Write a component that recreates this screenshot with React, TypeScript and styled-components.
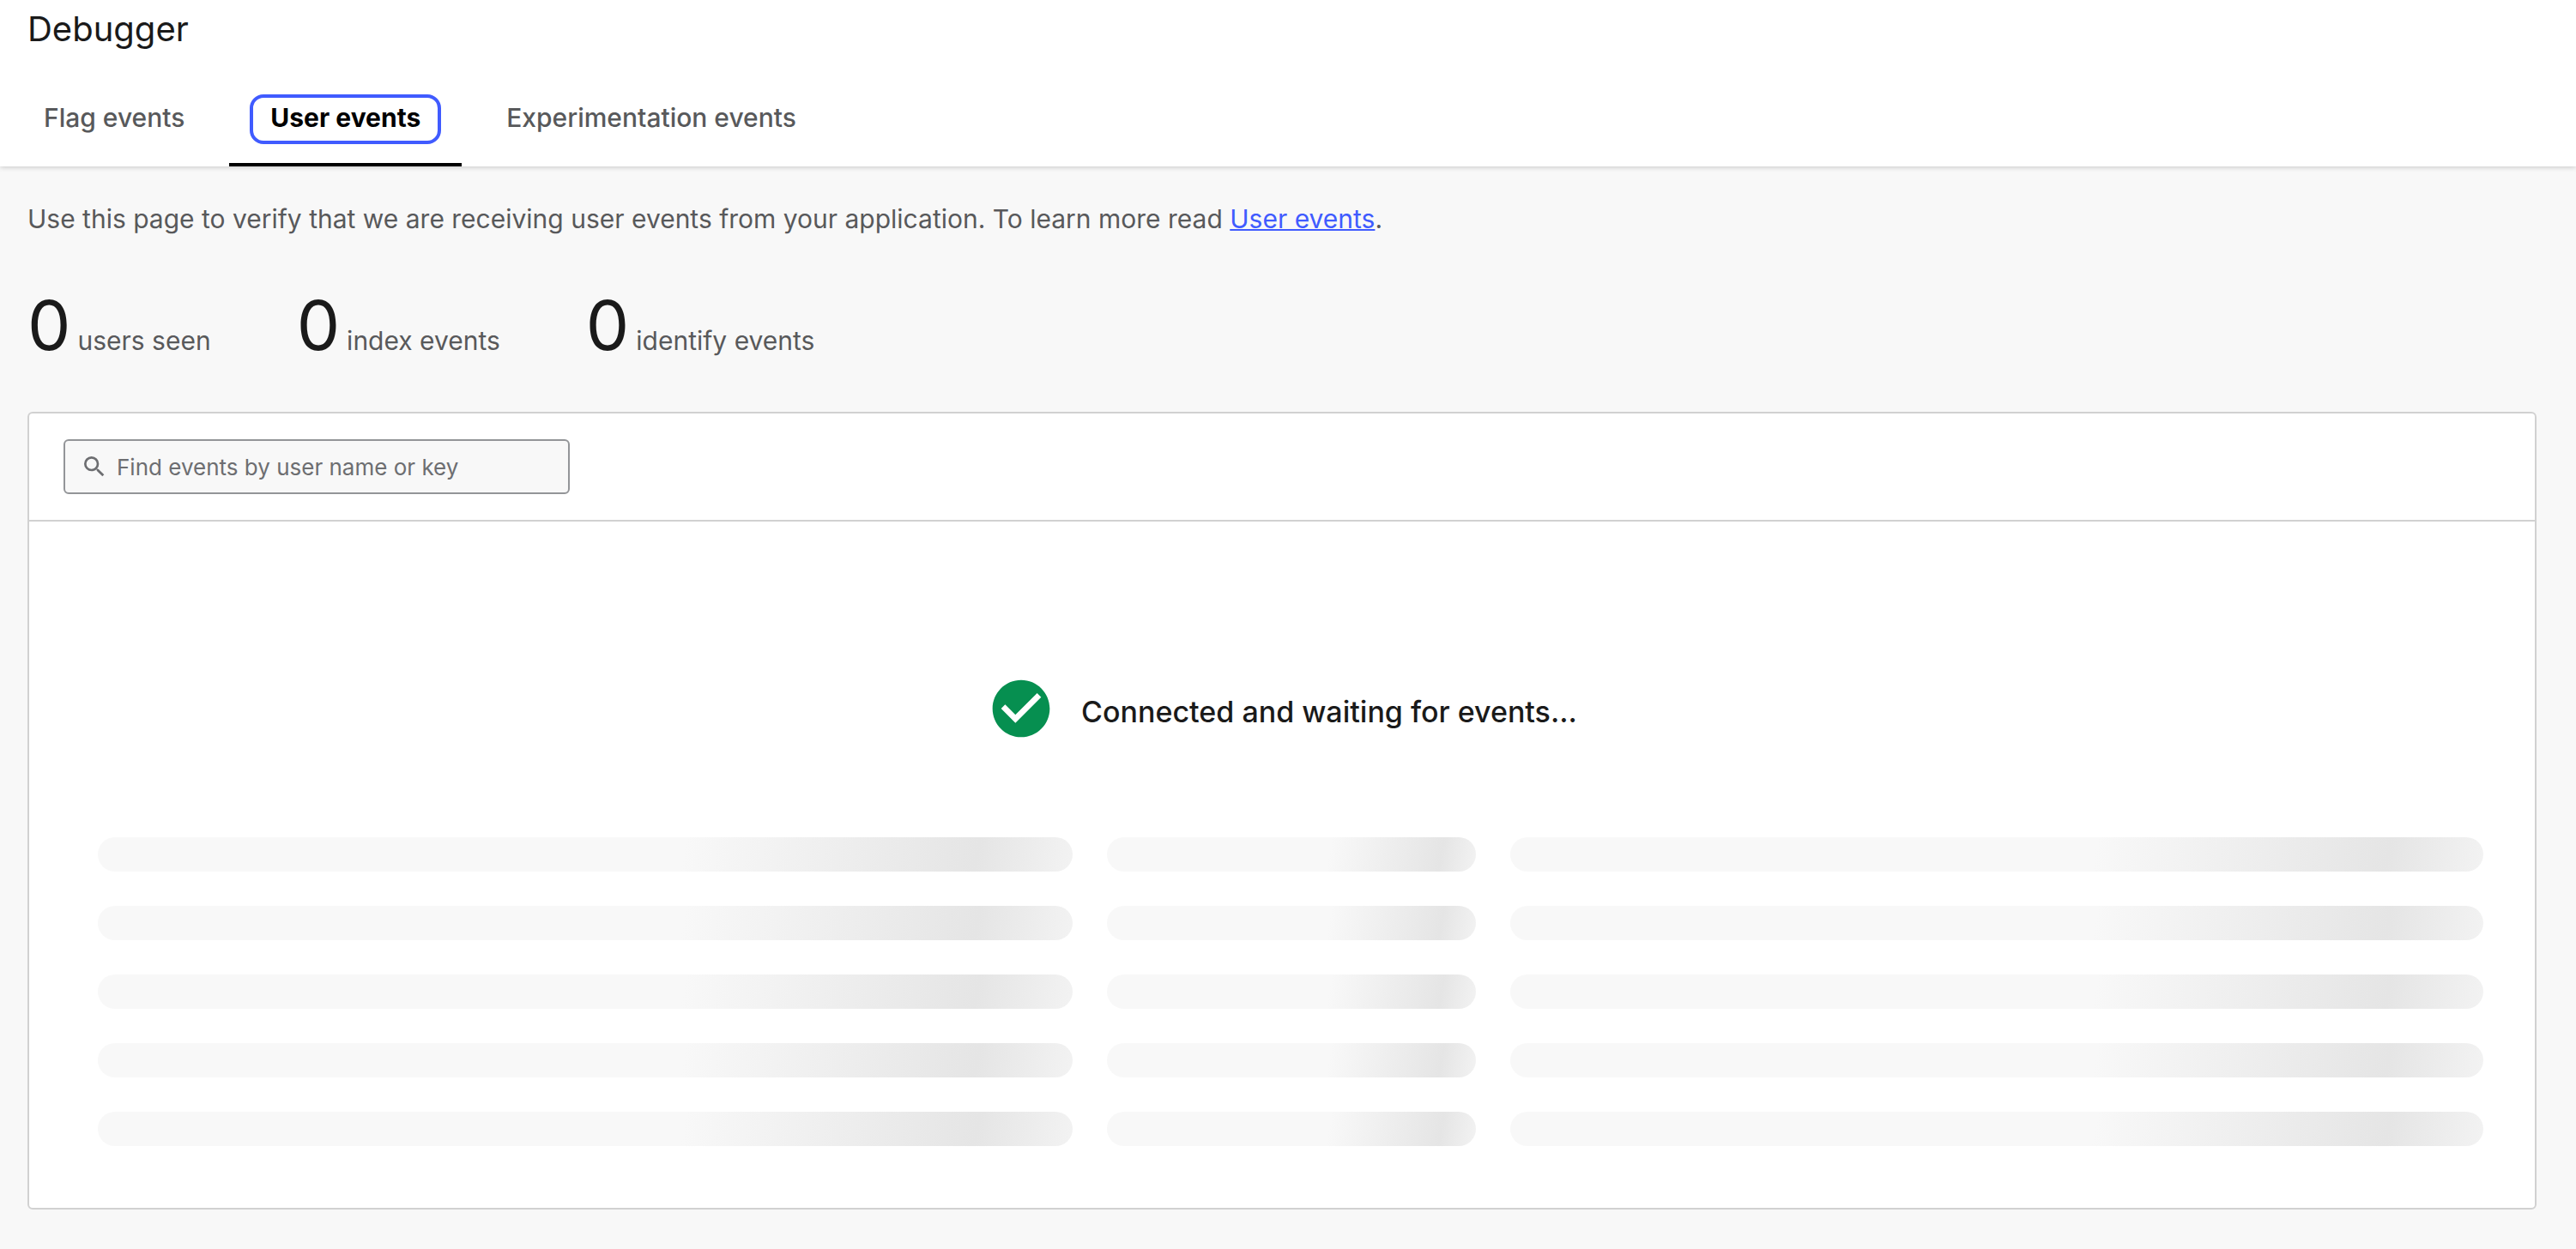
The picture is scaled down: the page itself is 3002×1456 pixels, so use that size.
import React, { useState } from "react";
import styled, { createGlobalStyle } from "styled-components";

const GlobalStyle = createGlobalStyle`
  *, *::before, *::after { box-sizing: border-box; }
  body {
    margin: 0;
    background: #f8f8f8;
    color: #1a1a1a;
    font-family: Inter, "Liberation Sans", sans-serif;
    font-size: 30px;
    line-height: 42px;
  }
`;

const Header = styled.header`
  position: relative;
  padding-top: 10px;
  background: #ffffff;
  box-shadow: 0 1px 6px rgba(0, 0, 0, 0.2);
`;

const Title = styled.h1`
  margin: 0;
  padding: 0 32px;
  font-size: 40px;
  line-height: 48px;
  font-weight: 400;
`;

const TabList = styled.div`
  display: flex;
  gap: 4px;
  margin-top: 52px;
  padding-left: 3px;
`;

const TabLabel = styled.span`
  display: block;
  padding: 5px 20px 9px;
  border: 4px solid transparent;
  border-radius: 16px;
`;

const Tab = styled.button<{ $active: boolean }>`
  padding: 0 24px 22px;
  border: 0;
  border-bottom: 4px solid ${(p) => (p.$active ? "#000000" : "transparent")};
  background: none;
  color: ${(p) => (p.$active ? "#000000" : "#58595b")};
  font: inherit;
  font-weight: ${(p) => (p.$active ? 700 : 500)};
  line-height: 36px;
  cursor: pointer;
  outline: none;

  ${TabLabel} {
    border-color: ${(p) => (p.$active ? "#405bff" : "transparent")};
  }
`;

const Main = styled.main`
  padding: 40px 46px 46px 32px;
`;

const Intro = styled.p`
  margin: 0;
  color: #58595b;
`;

const DocsLink = styled.a`
  color: #405bff;
  text-decoration: underline;
  text-decoration-thickness: 2px;
`;

const Stats = styled.div`
  display: flex;
  gap: 100px;
  margin: 55px 0 53px;
`;

const Stat = styled.div`
  display: flex;
  align-items: baseline;
  gap: 8px;
  color: #58595b;
`;

const Count = styled.span`
  color: #1a1a1a;
  font-size: 80px;
  line-height: 96px;
`;

const Card = styled.section`
  border: 2px solid #d1d1d1;
  border-radius: 6px;
  background: #ffffff;
`;

const Toolbar = styled.div`
  padding: 30px 40px;
  border-bottom: 2px solid #d1d1d1;
`;

const SearchField = styled.label`
  display: flex;
  align-items: center;
  gap: 10px;
  width: 590px;
  max-width: 100%;
  height: 64px;
  padding: 0 18px;
  border: 2px solid #939598;
  border-radius: 6px;
  background: #f8f8f8;
  color: #6d6e71;
`;

const SearchInput = styled.input`
  flex: 1;
  min-width: 0;
  padding: 2px 0 0;
  border: 0;
  outline: none;
  background: none;
  color: #1a1a1a;
  font: inherit;
  font-size: 26px;

  &::placeholder {
    color: #6d6e71;
    opacity: 1;
  }
`;

const Feed = styled.div`
  padding: 178px 60px 72px 80px;
`;

const Status = styled.div`
  display: flex;
  align-items: center;
  justify-content: center;
  gap: 30px;
  padding-right: 20px;
  margin-bottom: 110px;
  font-size: 34px;
  font-weight: 500;
`;

const StatusText = styled.span`
  padding-top: 8px;
`;

const Placeholders = styled.div`
  display: grid;
  grid-template-columns: 1136fr 430fr 1134fr;
  gap: 40px;
`;

const Bar = styled.div`
  height: 40px;
  border-radius: 20px;
  background: linear-gradient(100deg, #f8f8f8 60%, #e5e5e5 90%, #f8f8f8 104%);
`;

const tabs = ["Flag events", "User events", "Experimentation events"];

const stats = [
  { count: 0, label: "users seen" },
  { count: 0, label: "index events" },
  { count: 0, label: "identify events" },
];

const SearchIcon = () => (
  <svg width="32" height="32" viewBox="0 0 24 24" fill="currentColor" aria-hidden="true">
    <path d="M15.5 14h-.79l-.28-.27A6.47 6.47 0 0 0 16 9.5 6.5 6.5 0 1 0 9.5 16c1.61 0 3.09-.59 4.23-1.57l.27.28v.79l5 4.99L20.49 19l-4.99-5zm-6 0a4.5 4.5 0 1 1 0-9 4.5 4.5 0 0 1 0 9z" />
  </svg>
);

const CheckCircleIcon = () => (
  <svg width="80" height="80" viewBox="0 0 24 24" fill="#068f50" aria-hidden="true">
    <path d="M12 2C6.48 2 2 6.48 2 12s4.48 10 10 10 10-4.48 10-10S17.52 2 12 2zm-2 15l-5-5 1.41-1.41L10 14.17l7.59-7.59L19 8l-9 9z" />
  </svg>
);

export default function App() {
  const [active, setActive] = useState("User events");
  const [query, setQuery] = useState("");

  return (
    <>
      <GlobalStyle />
      <Header>
        <Title>Debugger</Title>
        <TabList role="tablist">
          {tabs.map((tab) => (
            <Tab
              key={tab}
              type="button"
              role="tab"
              aria-selected={tab === active}
              $active={tab === active}
              onClick={() => setActive(tab)}
            >
              <TabLabel>{tab}</TabLabel>
            </Tab>
          ))}
        </TabList>
      </Header>
      <Main>
        <Intro>
          Use this page to verify that we are receiving user events from your application. To learn more read{" "}
          <DocsLink href="#user-events">User events</DocsLink>.
        </Intro>
        <Stats>
          {stats.map(({ count, label }) => (
            <Stat key={label}>
              <Count>{count}</Count>
              <span>{label}</span>
            </Stat>
          ))}
        </Stats>
        <Card>
          <Toolbar>
            <SearchField>
              <SearchIcon />
              <SearchInput
                type="text"
                aria-label="Find events by user name or key"
                placeholder="Find events by user name or key"
                value={query}
                onChange={(e) => setQuery(e.target.value)}
              />
            </SearchField>
          </Toolbar>
          <Feed>
            <Status role="status">
              <CheckCircleIcon />
              <StatusText>Connected and waiting for events...</StatusText>
            </Status>
            <Placeholders aria-hidden="true">
              {Array.from({ length: 15 }, (_, i) => (
                <Bar key={i} />
              ))}
            </Placeholders>
          </Feed>
        </Card>
      </Main>
    </>
  );
}
